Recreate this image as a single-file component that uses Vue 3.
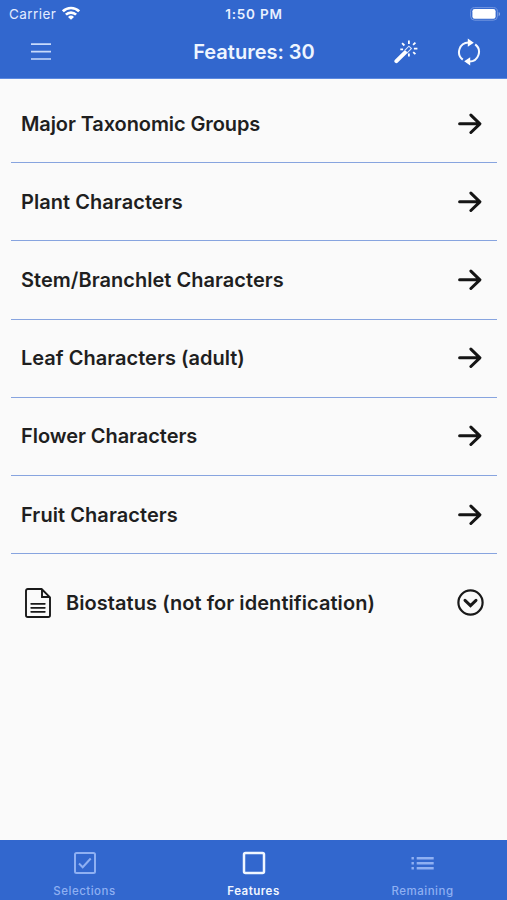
<script setup>
const groups = [
  { label: 'Major Taxonomic Groups', spacing: -0.1 },
  { label: 'Plant Characters', spacing: 0.05 },
  { label: 'Stem/Branchlet Characters', spacing: 0.03 },
  { label: 'Leaf Characters (adult)', spacing: 0.02 },
  { label: 'Flower Characters', spacing: -0.05 },
  { label: 'Fruit Characters', spacing: 0.07 },
]
</script>

<template>
  <div class="screen">
    <header class="header">
      <div class="status">
        <div class="carrier">
          <span>Carrier</span>
          <svg class="wifi" viewBox="0 0 18 14" width="18" height="14">
            <g fill="none" stroke="#fff" stroke-width="2.6">
              <path d="M.9 5.3a11.5 11.5 0 0 1 16.2 0" />
              <path d="M3.9 8.7a7.2 7.2 0 0 1 10.2 0" />
            </g>
            <path d="M9 13.8L6 11a4.3 4.3 0 0 1 6 0z" fill="#fff" />
          </svg>
        </div>
        <div class="time">1:50 PM</div>
        <div class="battery">
          <svg viewBox="0 0 31 14" width="31" height="14">
            <rect x=".6" y=".6" width="26.8" height="12.6" rx="4" fill="none" stroke="#7396df" />
            <rect x="2.4" y="2.1" width="23.2" height="9.6" rx="2.2" fill="#fff" />
            <path d="M28.7 5v4.2a2.3 2.3 0 0 0 0-4.2z" fill="#8fabe5" />
          </svg>
        </div>
      </div>
      <div class="toolbar">
        <svg class="menu" viewBox="0 0 20 18" width="20" height="18">
          <path d="M0 1.2h20M0 8.6h20M0 16h20" stroke="#c8dafb" stroke-width="1.7" />
        </svg>
        <h1>Features: 30</h1>
        <div class="actions">
          <svg viewBox="0 0 24 24" width="24" height="24" fill="none" stroke="#fff">
            <path d="M2.4 21.2L11 12.7" stroke-width="4" stroke-linecap="round" />
            <path d="M10.5 10.7l4.4-4.5 2.5 2.4-4.5 4.5" stroke="#d9e6ff" stroke-width="1.1" />
            <path d="M14.9.6v3.3M8.1 3.2l2.3 2.3M6.3 9.4h2.8M21.4 2.6l-2.3 2.3M19.9 8.7h3.5M19.2 12.1l2.2 2.1M14.9 13.4v3.1" stroke-width="1.8" />
          </svg>
          <svg viewBox="0 0 24 28" width="24" height="28" fill="none" stroke="#f4f8ff" stroke-width="2">
            <path d="M5.8 21.6A9.6 9.6 0 0 1 11.5 4.4M18.2 6.4A9.6 9.6 0 0 1 12.5 23.6" />
            <path d="M10.8.6l6 4.1-6 4.1zM13.2 27.4l-6-4.1 6-4.1z" fill="#fff" stroke="none" />
          </svg>
        </div>
      </div>
    </header>

    <main class="list">
      <div v-for="g in groups" :key="g.label" class="row">
        <span :style="{ letterSpacing: g.spacing + 'px' }">{{ g.label }}</span>
        <svg viewBox="0 0 24 22" width="24" height="22">
          <path d="M1.6 10.8h20M12.9 2.1l9 8.7-9 8.7" fill="none" stroke="#151515" stroke-width="3" stroke-linecap="round" stroke-linejoin="round" />
        </svg>
      </div>
      <div class="row status-row">
        <svg class="doc" viewBox="0 0 26 30" width="26" height="30" fill="none" stroke="#191919">
          <path d="M2.8 1h13.8L25 9.4v17.8a1.8 1.8 0 0 1-1.8 1.8H2.8A1.8 1.8 0 0 1 1 27.2V2.8A1.8 1.8 0 0 1 2.8 1z" stroke-width="1.9" stroke-linejoin="round" />
          <path d="M17 1.5V9h7.5" stroke-width="1.9" />
          <path d="M6.2 15.8h13.6M6.2 19.8h13.6M6.2 23.8h13.6" stroke-width="1.8" stroke-linecap="round" />
        </svg>
        <span class="status-label">Biostatus (not for identification)</span>
        <svg class="chevron" viewBox="0 0 27 27" width="27" height="27" fill="none" stroke="#191919">
          <circle cx="13.5" cy="13.5" r="12.1" stroke-width="2.2" />
          <path d="M8 11.4l5.5 5.2 5.5-5.2" stroke-width="3" stroke-linecap="round" />
        </svg>
      </div>
    </main>

    <nav class="tabs">
      <div class="tab">
        <svg viewBox="0 0 24 24" width="24" height="24" fill="none" stroke="currentColor" stroke-width="2">
          <rect x="2" y="2" width="20" height="20" rx="1.5" />
          <path d="M6 12.5l3.7 3.7 8-8.7" />
        </svg>
        <span>Selections</span>
      </div>
      <div class="tab active">
        <svg viewBox="0 0 24 24" width="24" height="24" fill="none" stroke="currentColor" stroke-width="2.5">
          <rect x="2" y="2" width="20" height="20" rx="1.5" />
        </svg>
        <span>Features</span>
      </div>
      <div class="tab">
        <svg viewBox="0 0 24 24" width="24" height="24" stroke="currentColor" stroke-width="2.6">
          <path d="M.5 7.2h2.4M5.7 7.2h17M.5 12.2h2.4M5.7 12.2h17M.5 17.2h2.4M5.7 17.2h17" />
        </svg>
        <span>Remaining</span>
      </div>
    </nav>
  </div>
</template>

<style>
body {
  background: #fafafa;
}
</style>

<style scoped>
.screen {
  width: 507px;
  height: 900px;
  display: flex;
  flex-direction: column;
  background: #fafafa;
  font-family: Inter, "Liberation Sans", sans-serif;
  color: #1f1f1f;
}
svg {
  display: block;
  flex: none;
}
.header {
  height: 79px;
  box-sizing: border-box;
  background: #3267ce;
  border-bottom: 1px solid #5c89e0;
  color: #fff;
}
.status {
  height: 27px;
  display: grid;
  grid-template-columns: 1fr auto 1fr;
  align-items: center;
  padding: 0 6px 0 9px;
}
.carrier {
  display: flex;
  align-items: center;
  gap: 6px;
  font-size: 13.5px;
  letter-spacing: 0.45px;
  color: #e3ecff;
}
.wifi {
  margin-bottom: 2px;
}
.time {
  margin: 0 1px 0 -1px;
  font-size: 13.5px;
  font-weight: 600;
  letter-spacing: 0.8px;
  color: #e9f0ff;
}
.battery {
  display: flex;
  justify-content: flex-end;
}
.toolbar {
  height: 50px;
  display: grid;
  grid-template-columns: 1fr auto 1fr;
  align-items: center;
  padding: 0 26px 0 31px;
}
h1 {
  margin: 0 2px 0 -2px;
  font-size: 20px;
  line-height: 24px;
  font-weight: 600;
  color: #eef5ff;
}
.actions {
  display: flex;
  justify-content: flex-end;
  align-items: center;
  gap: 39px;
}
.list {
  flex: 1;
  padding: 6px 10px 0 11px;
}
.row {
  height: 78.2px;
  box-sizing: border-box;
  display: flex;
  align-items: center;
  justify-content: space-between;
  padding: 0 15px 0 10px;
  border-bottom: 1px solid #87a4df;
  font-size: 20px;
  font-weight: 600;
}
.status-row {
  height: 97px;
  border-bottom: 0;
  padding: 0 13px 0 14px;
}
.status-label {
  letter-spacing: 0.06px;
}
.doc {
  margin-right: 15px;
}
.chevron {
  margin-left: auto;
}
.tabs {
  height: 60px;
  display: grid;
  grid-template-columns: repeat(3, 1fr);
  background: #3267ce;
}
.tab {
  display: flex;
  flex-direction: column;
  align-items: center;
  gap: 8px;
  padding-top: 11px;
  color: #8fb0f2;
  font-size: 11.5px;
  line-height: 16px;
  font-weight: 500;
  letter-spacing: 0.5px;
}
.active {
  color: #f0f6ff;
  font-weight: 600;
}
</style>
